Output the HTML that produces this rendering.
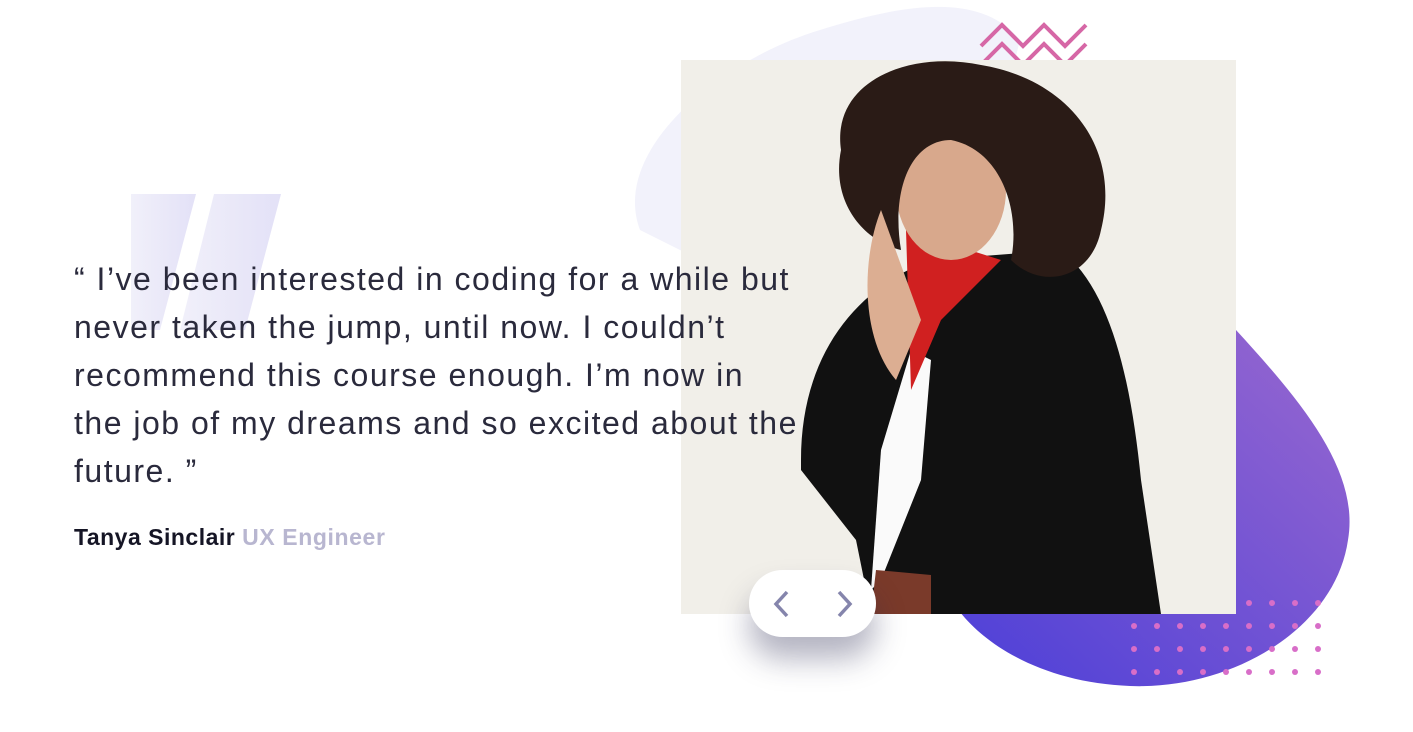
<!DOCTYPE html>
<html><head><meta charset="utf-8"><style>
html,body{margin:0;padding:0;width:1413px;height:732px;overflow:hidden;background:#fff;font-family:"Liberation Sans",sans-serif}
.abs{position:absolute}
.quote{left:74px;top:255px;font-size:32px;line-height:48px;color:#2a2a3c;font-weight:300;letter-spacing:1.5px;white-space:nowrap;z-index:5}
.name{left:74px;top:524px;font-size:23px;font-weight:bold;color:#151525;letter-spacing:0.5px;white-space:nowrap}
.name span{color:#b8b6d0;font-weight:bold;letter-spacing:0.6px}
.btns{left:749px;top:570px;width:127px;height:67px;border-radius:34px;background:#fff;box-shadow:0 22px 30px rgba(40,40,80,.35);z-index:6}
</style></head><body>
<svg class="abs" style="left:0;top:0" width="1413" height="732">
<defs>
<linearGradient id="g" x1="1" y1="0" x2="0" y2="1"><stop offset="0" stop-color="#9968cf"/><stop offset="1" stop-color="#4c3fd8"/></linearGradient>
<linearGradient id="q" x1="0" y1="0" x2="1" y2="0"><stop offset="0" stop-color="#f1f0fa"/><stop offset="1" stop-color="#e3e1f7"/></linearGradient>
</defs>
<path d="M640 230 C610 150 720 60 820 30 C900 5 980 -10 1020 40 L1000 120 L700 260 Z" fill="#f2f2fb"/>
<path d="M1236 330 C1300 400 1360 470 1348 540 C1335 630 1230 690 1130 686 C1050 683 990 650 960 612 L1236 612 Z" fill="url(#g)"/>
<polygon points="131,194 196,194 160,330 131,330" fill="url(#q)"/>
<polygon points="214,194 281,194 245,330 180,330" fill="url(#q)"/>
<g fill="none" stroke="#d667a6" stroke-width="4">
<polyline points="981,46 1002,25 1023,46 1044,25 1065,46 1086,25"/>
<polyline points="981,65 1002,44 1023,65 1044,44 1065,65 1086,44"/>
</g>
</svg>
<svg class="abs" style="left:0;top:0;z-index:1" width="1413" height="732">
<g fill="#d86ec8">
<circle cx="1134" cy="603" r="3"/><circle cx="1157" cy="603" r="3"/><circle cx="1180" cy="603" r="3"/><circle cx="1203" cy="603" r="3"/><circle cx="1226" cy="603" r="3"/><circle cx="1249" cy="603" r="3"/><circle cx="1272" cy="603" r="3"/><circle cx="1295" cy="603" r="3"/><circle cx="1318" cy="603" r="3"/>
<circle cx="1134" cy="626" r="3"/><circle cx="1157" cy="626" r="3"/><circle cx="1180" cy="626" r="3"/><circle cx="1203" cy="626" r="3"/><circle cx="1226" cy="626" r="3"/><circle cx="1249" cy="626" r="3"/><circle cx="1272" cy="626" r="3"/><circle cx="1295" cy="626" r="3"/><circle cx="1318" cy="626" r="3"/>
<circle cx="1134" cy="649" r="3"/><circle cx="1157" cy="649" r="3"/><circle cx="1180" cy="649" r="3"/><circle cx="1203" cy="649" r="3"/><circle cx="1226" cy="649" r="3"/><circle cx="1249" cy="649" r="3"/><circle cx="1272" cy="649" r="3"/><circle cx="1295" cy="649" r="3"/><circle cx="1318" cy="649" r="3"/>
<circle cx="1134" cy="672" r="3"/><circle cx="1157" cy="672" r="3"/><circle cx="1180" cy="672" r="3"/><circle cx="1203" cy="672" r="3"/><circle cx="1226" cy="672" r="3"/><circle cx="1249" cy="672" r="3"/><circle cx="1272" cy="672" r="3"/><circle cx="1295" cy="672" r="3"/><circle cx="1318" cy="672" r="3"/>
</g>
</svg>
<svg class="abs" style="left:681px;top:60px;z-index:2" width="555" height="554">
<rect width="555" height="554" fill="#f1efe9"/>
<path d="M120 400 C120 300 170 230 250 200 L380 190 C430 230 450 320 460 420 L480 554 L190 554 L175 480 L120 410 Z" fill="#111"/>
<path d="M200 390 L230 290 L250 300 L240 420 L200 520 L190 530 Z" fill="#fafafa"/>
<path d="M225 170 L320 200 L260 260 L230 330 Z" fill="#d02020"/>
<path d="M190 554 L195 510 L250 515 L250 554 Z" fill="#7a3a2a"/>
<ellipse cx="270" cy="130" rx="55" ry="70" fill="#d8a88c"/>
<path d="M160 90 C150 20 230 -10 300 5 C390 20 440 90 420 170 C410 220 360 230 330 200 C340 150 320 90 270 80 C230 80 210 130 220 190 C180 180 150 140 160 90 Z" fill="#2a1b16"/>
<path d="M200 150 C180 200 180 280 215 320 L240 260 Z" fill="#dcae92"/>
</svg>
<div class="abs quote">“ I’ve been interested in coding for a while but<br>never taken the jump, until now. I couldn’t<br>recommend this course enough. I’m now in<br>the job of my dreams and so excited about the<br>future. ”</div>
<div class="abs name">Tanya Sinclair <span>UX Engineer</span></div>
<div class="abs btns"><svg width="127" height="67"><g fill="none" stroke="#8585ac" stroke-width="3.5"><polyline points="38,22 27,34 38,46"/><polyline points="90,22 101,34 90,46"/></g></svg></div>
</body></html>
